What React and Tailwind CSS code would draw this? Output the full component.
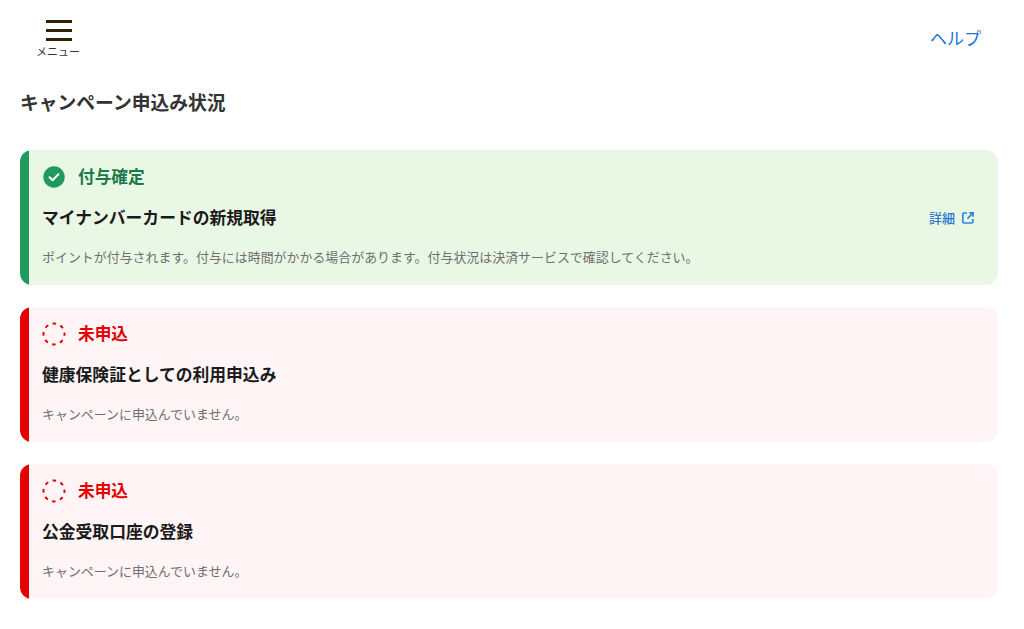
function StatusIcon({ done }) {
  if (done) {
    return (
      <svg width="24" height="24" viewBox="0 0 24 24" className="shrink-0">
        <circle cx="12" cy="12" r="10.7" fill="#1f9a5c" />
        <path d="M7.6 12.3l3 2.9 5.8-5.9" fill="none" stroke="#fff" strokeWidth="2.1" strokeLinecap="round" strokeLinejoin="round" />
      </svg>
    )
  }
  return (
    <svg width="24" height="24" viewBox="0 0 24 24" className="shrink-0">
      <circle cx="12" cy="12" r="10.5" fill="none" stroke="#e60000" strokeWidth="2" strokeDasharray="3.6 4.65" strokeDashoffset="1.8" />
    </svg>
  )
}

function LinkIcon() {
  return (
    <svg width="14" height="14" viewBox="0 0 14 14" fill="none" stroke="#2d86de" strokeWidth="1.7" className="shrink-0">
      <path d="M6 2H3a1.2 1.2 0 0 0-1.2 1.2v7.6A1.2 1.2 0 0 0 3 12h7.6a1.2 1.2 0 0 0 1.2-1.2V8" />
      <path d="M8.2 1.9h3.9v3.9M12 2L6.4 7.6" />
    </svg>
  )
}

function CampaignCard({ done, status, title, note, link }) {
  return (
    <div className={done ? 'flex h-[135px] overflow-hidden rounded-xl bg-[#e9f8e5]' : 'flex h-[135px] overflow-hidden rounded-xl bg-[#fff5f6]'}>
      <div className={done ? 'w-[9px] shrink-0 bg-[#1f9a5c]' : 'w-[9px] shrink-0 bg-[#e60000]'} />
      <div className="min-w-0 flex-1 pl-[13px] pr-[23px] pt-[15px]">
        <div className="flex h-6 items-center gap-[12px]">
          <StatusIcon done={done} />
          <span className={done ? 'text-[16.7px] font-bold text-[#1c7a4a]' : 'text-[16.7px] font-bold text-[#e60000]'}>
            {status}
          </span>
        </div>
        <div className="mt-[17px] flex h-6 items-center justify-between">
          <h3 className="text-[16.8px] font-bold text-[#1a1a1a]">{title}</h3>
          {link && (
            <a className="flex items-center gap-[6px] text-[13px] font-medium text-[#2a78cc]">
              {link}
              <LinkIcon />
            </a>
          )}
        </div>
        <p className="mt-[17px] text-[12.95px] leading-[20px] text-[#6f6f6f]">{note}</p>
      </div>
    </div>
  )
}

export default function App() {
  return (
    <div className="h-[629px] bg-white font-['Noto_Sans_CJK_JP','Noto_Sans',sans-serif]">
      <header className="flex h-[76px] items-start justify-between pl-[37px] pr-[43px]">
        <button type="button" className="flex w-[44px] flex-col items-center pt-[20px]">
          <span className="flex w-[26px] flex-col gap-[6px]">
            <span className="h-[3px] bg-[#2e2206]" />
            <span className="h-[3px] bg-[#2e2206]" />
            <span className="h-[3px] bg-[#2e2206]" />
          </span>
          <span className="mr-[2px] mt-[2px] whitespace-nowrap text-[11px] leading-[16px] text-[#333333]">メニュー</span>
        </button>
        <a className="mt-[25px] text-[17px] leading-[26px] text-[#1a73d9]">ヘルプ</a>
      </header>
      <main className="pl-[20px] pr-[26px]">
        <h2 className="mt-[12px] text-[18.8px] leading-[28px] font-bold text-[#333333]">キャンペーン申込み状況</h2>
        <div className="mt-[34px] flex flex-col gap-[22px]">
          <CampaignCard
            done
            status="付与確定"
            title="マイナンバーカードの新規取得"
            note="ポイントが付与されます。付与には時間がかかる場合があります。付与状況は決済サービスで確認してください。"
            link="詳細"
          />
          <CampaignCard status="未申込" title="健康保険証としての利用申込み" note="キャンペーンに申込んでいません。" />
          <CampaignCard status="未申込" title="公金受取口座の登録" note="キャンペーンに申込んでいません。" />
        </div>
      </main>
    </div>
  )
}
